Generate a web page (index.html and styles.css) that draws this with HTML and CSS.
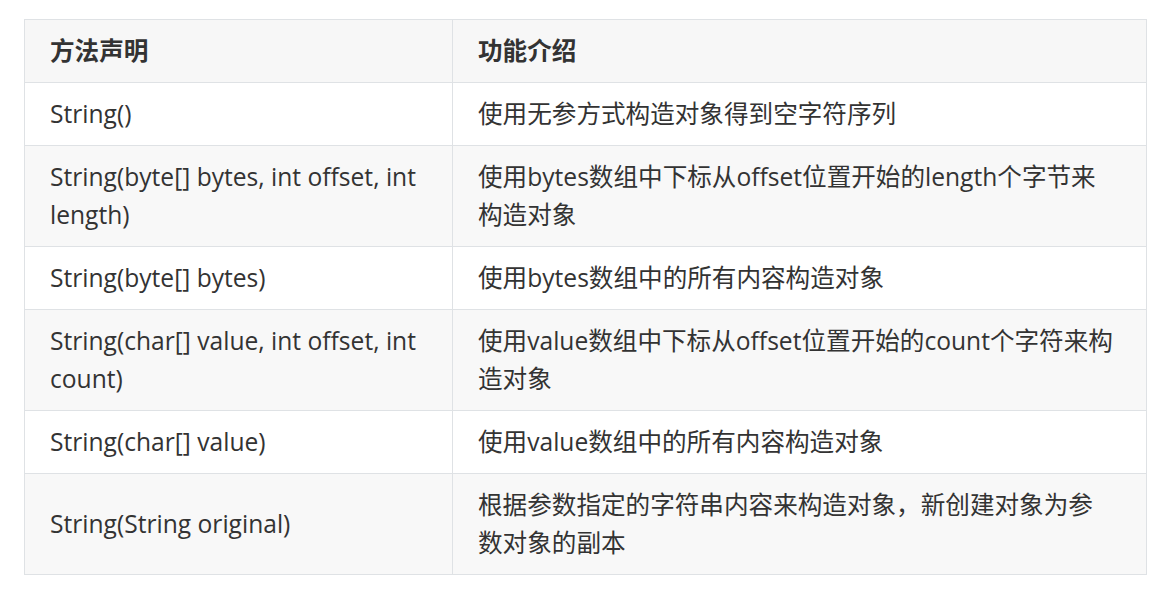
FILE: index.html
```html
<!DOCTYPE html>
<html lang="zh">
<head>
<meta charset="utf-8">
<link rel="stylesheet" href="styles.css">
</head>
<body>
<table class="api">
  <thead>
    <tr><th class="c1">方法声明</th><th class="c2">功能介绍</th></tr>
  </thead>
  <tbody>
    <tr><td>String()</td><td class="zh">使用无参方式构造对象得到空字符序列</td></tr>
    <tr><td>String(byte[] bytes, int offset, int length)</td><td class="zh">使用bytes数组中下标从offset位置开始的length个字节来构造对象</td></tr>
    <tr><td>String(byte[] bytes)</td><td class="zh">使用bytes数组中的所有内容构造对象</td></tr>
    <tr><td>String(char[] value, int offset, int count)</td><td class="zh">使用value数组中下标从offset位置开始的count个字符来构造对象</td></tr>
    <tr><td>String(char[] value)</td><td class="zh">使用value数组中的所有内容构造对象</td></tr>
    <tr><td>String(String original)</td><td class="zh">根据参数指定的字符串内容来构造对象，新创建对象为参数对象的副本</td></tr>
  </tbody>
</table>
</body>
</html>
```
FILE: styles.css
```css
html, body { margin: 0; background: #fff; }
body { padding: 19px 20px 0 24px; }
.api {
  border-collapse: collapse;
  width: 1123px;
  font-family: "Open Sans", "Noto Sans CJK SC", sans-serif;
  font-size: 24.6px;
  line-height: 38px;
  color: #333;
}
.api th, .api td {
  border: 1px solid #dfe2e5;
  padding: 12px 25px;
  text-align: left;
  vertical-align: middle;
}
.api th { font-weight: 700; background: #f7f7f7; }
.api .c1 { width: 377px; }
.api .zh { padding-right: 30px; }
.api tbody tr:nth-child(even) { background: #f8f8f8; }
.api tbody tr:nth-child(odd) { background: #fff; }
```
